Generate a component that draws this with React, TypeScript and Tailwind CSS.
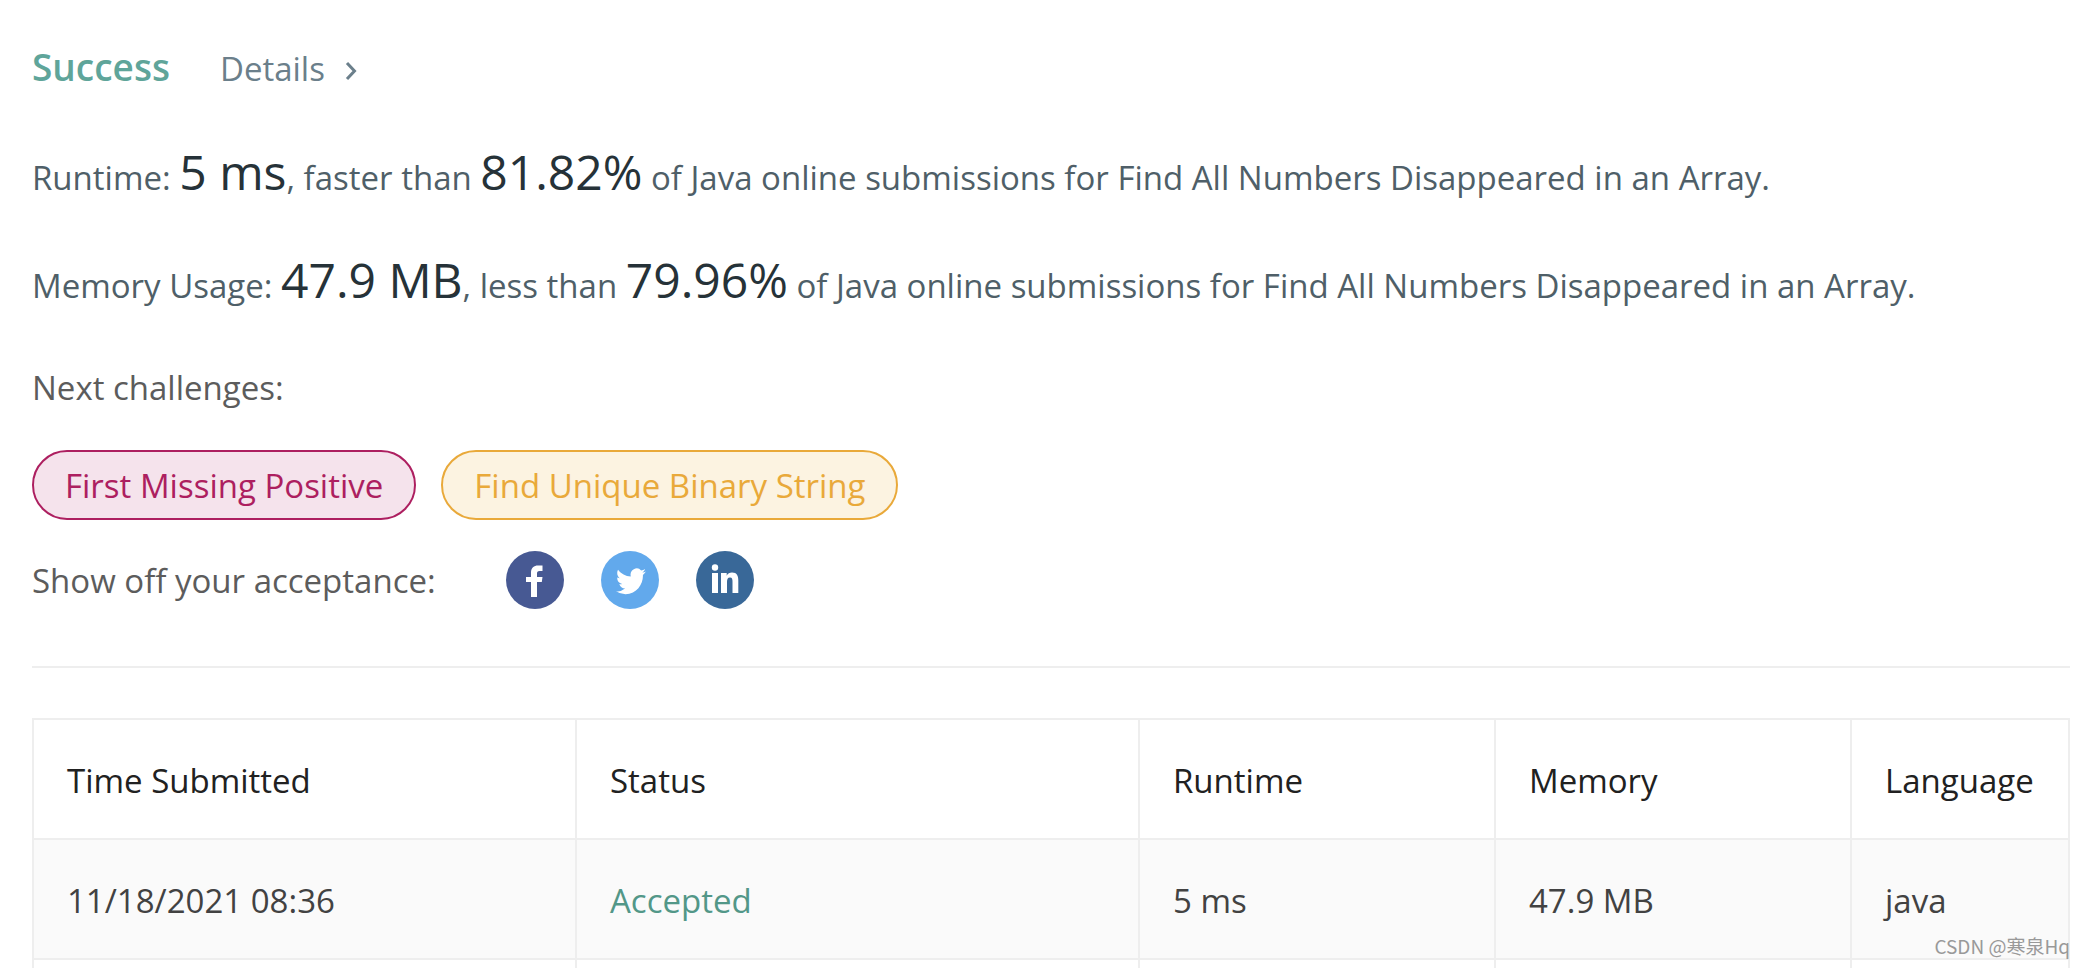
import { ReactNode } from 'react'

const problem = 'Find All Numbers Disappeared in an Array'

const columns = [
  { label: 'Time Submitted', width: 'w-[543px]' },
  { label: 'Status', width: 'w-[563px]' },
  { label: 'Runtime', width: 'w-[356px]' },
  { label: 'Memory', width: 'w-[356px]' },
  { label: 'Language', width: 'w-[218px]' },
]

const Figure = ({ children }: { children: ReactNode }) => (
  <span className="text-[48px] leading-none text-[#263238]">{children}</span>
)

const App = () => {
  return (
    <main className="relative h-screen overflow-hidden bg-white pl-8 pr-[13px] font-['Open_Sans','Noto_Sans',sans-serif] text-[33px] leading-[48px] text-[#546e7a]">
      <div className="flex items-baseline pt-[43px]">
        <h1 className="text-[37px] font-semibold text-[#5fa59a]">Success</h1>
        <a href="#details" className="ml-[50px] flex items-center text-[#6b7f8b]">
          Details
          <svg className="ml-5 mt-1 h-5 w-3" viewBox="0 0 12 20" fill="none" stroke="currentColor" strokeWidth="3">
            <path d="M2 2l7.500 8L2 18" />
          </svg>
        </a>
      </div>

      <div className="mt-[49px] space-y-[36px] whitespace-nowrap text-[#4f5f68]">
        <p className="leading-[72px]">
          Runtime: <Figure>5 ms</Figure>, faster than <Figure>81.82%</Figure> of Java online submissions for {problem}.
        </p>
        <p className="leading-[72px]">
          Memory Usage: <Figure>47.9 MB</Figure>, less than <Figure>79.96%</Figure> of Java online submissions for {problem}.
        </p>
      </div>

      <p className="mt-[42px] text-[#5c5c5c]">Next challenges:</p>
      <div className="mt-[38px] flex gap-[25px]">
        <a href="#first-missing-positive" className="flex h-[70px] items-center rounded-full border-2 border-[#ad1f60] bg-[#f5e3ec] px-[31px] pt-[2px] text-[#ad1f60]">
          First Missing Positive
        </a>
        <a href="#find-unique-binary-string" className="flex h-[70px] items-center rounded-full border-2 border-[#e9a93a] bg-[#fcf3e1] px-[31px] pt-[2px] text-[#e9a93a]">
          Find Unique Binary String
        </a>
      </div>

      <div className="mt-[31px] flex items-center text-[#5c5c5c]">
        <span className="w-[474px] pt-[2px]">Show off your acceptance:</span>
        <div className="flex gap-[37px]">
          <a href="#facebook" aria-label="Facebook">
            <svg className="size-[58px]" viewBox="0 0 58 58">
              <circle cx="29" cy="29" r="29" fill="#475993" />
              <path fill="#fff" d="M25 46V31h-5v-5h5v-4.500C25 17 28 14.500 32 14.500h4.500v5.500H33.500c-2 0-2.500 1-2.500 2.500V26h5.500l-.7 5H31v15z" />
            </svg>
          </a>
          <a href="#twitter" aria-label="Twitter">
            <svg className="size-[58px]" viewBox="0 0 58 58">
              <circle cx="29" cy="29" r="29" fill="#62a9ec" />
              <path
                fill="#fff"
                transform="translate(15 14.500) scale(1.250 1.320)"
                d="M23.950 4.570a10 10 0 0 1-2.820.77 4.960 4.960 0 0 0 2.160-2.720c-.95.55-2 .96-3.130 1.180a4.920 4.920 0 0 0-8.380 4.480C7.690 8.100 4.070 6.130 1.640 3.160a4.820 4.820 0 0 0-.67 2.480c0 1.710.87 3.210 2.190 4.100a4.900 4.900 0 0 1-2.230-.62v.06a4.920 4.920 0 0 0 3.950 4.830 5 5 0 0 1-2.210.08 4.940 4.940 0 0 0 4.600 3.420A9.870 9.870 0 0 1 0 19.540a14 14 0 0 0 7.550 2.210c9.050 0 14-7.500 14-13.980 0-.21 0-.42-.02-.63a9.940 9.940 0 0 0 2.420-2.570z"
              />
            </svg>
          </a>
          <a href="#linkedin" aria-label="LinkedIn">
            <svg className="size-[58px]" viewBox="0 0 58 58">
              <circle cx="29" cy="29" r="29" fill="#396898" />
              <g fill="#fff">
                <circle cx="19" cy="16.500" r="3.200" />
                <path d="M16 22h6v20h-6zM25 22h5.700v2.700c1-2 3-3.200 5.300-3.200 5 0 6.300 3.300 6.300 8V42h-5.800V31c0-2.700-.2-4.500-2.500-4.500-2.400 0-3 1.800-3 4.500v11h-6z" />
              </g>
            </svg>
          </a>
        </div>
      </div>

      <hr className="mt-[57px] border-t-2 border-[#eeeeee]" />

      <table className="mt-[50px] w-full table-fixed border-collapse text-left text-[#424242]">
        <thead>
          <tr className="h-[120px] text-[#212121]">
            {columns.map((col) => (
              <th key={col.label} className={`${col.width} border-2 border-[#eeeeee] px-[33px] pt-[3px] font-normal`}>
                {col.label}
              </th>
            ))}
          </tr>
        </thead>
        <tbody>
          <tr className="h-[120px] bg-[#fafafa]">
            <td className="border-2 border-[#eeeeee] px-[33px] pt-[3px]">11/18/2021 08:36</td>
            <td className="border-2 border-[#eeeeee] px-[33px] pt-[3px]">
              <a href="#submission" className="text-[#529788]">Accepted</a>
            </td>
            <td className="border-2 border-[#eeeeee] px-[33px] pt-[3px]">5 ms</td>
            <td className="border-2 border-[#eeeeee] px-[33px] pt-[3px]">47.9 MB</td>
            <td className="border-2 border-[#eeeeee] px-[33px] pt-[3px]">java</td>
          </tr>
          <tr className="h-[120px]">
            {columns.map((col) => (
              <td key={col.label} className="border-2 border-[#eeeeee]" />
            ))}
          </tr>
        </tbody>
      </table>

      <span className="absolute bottom-2 right-[13px] font-['Noto_Sans_CJK_SC',sans-serif] text-[19px] leading-7 text-[#999999]">
        CSDN @寒泉Hq
      </span>
    </main>
  )
}

export default App
